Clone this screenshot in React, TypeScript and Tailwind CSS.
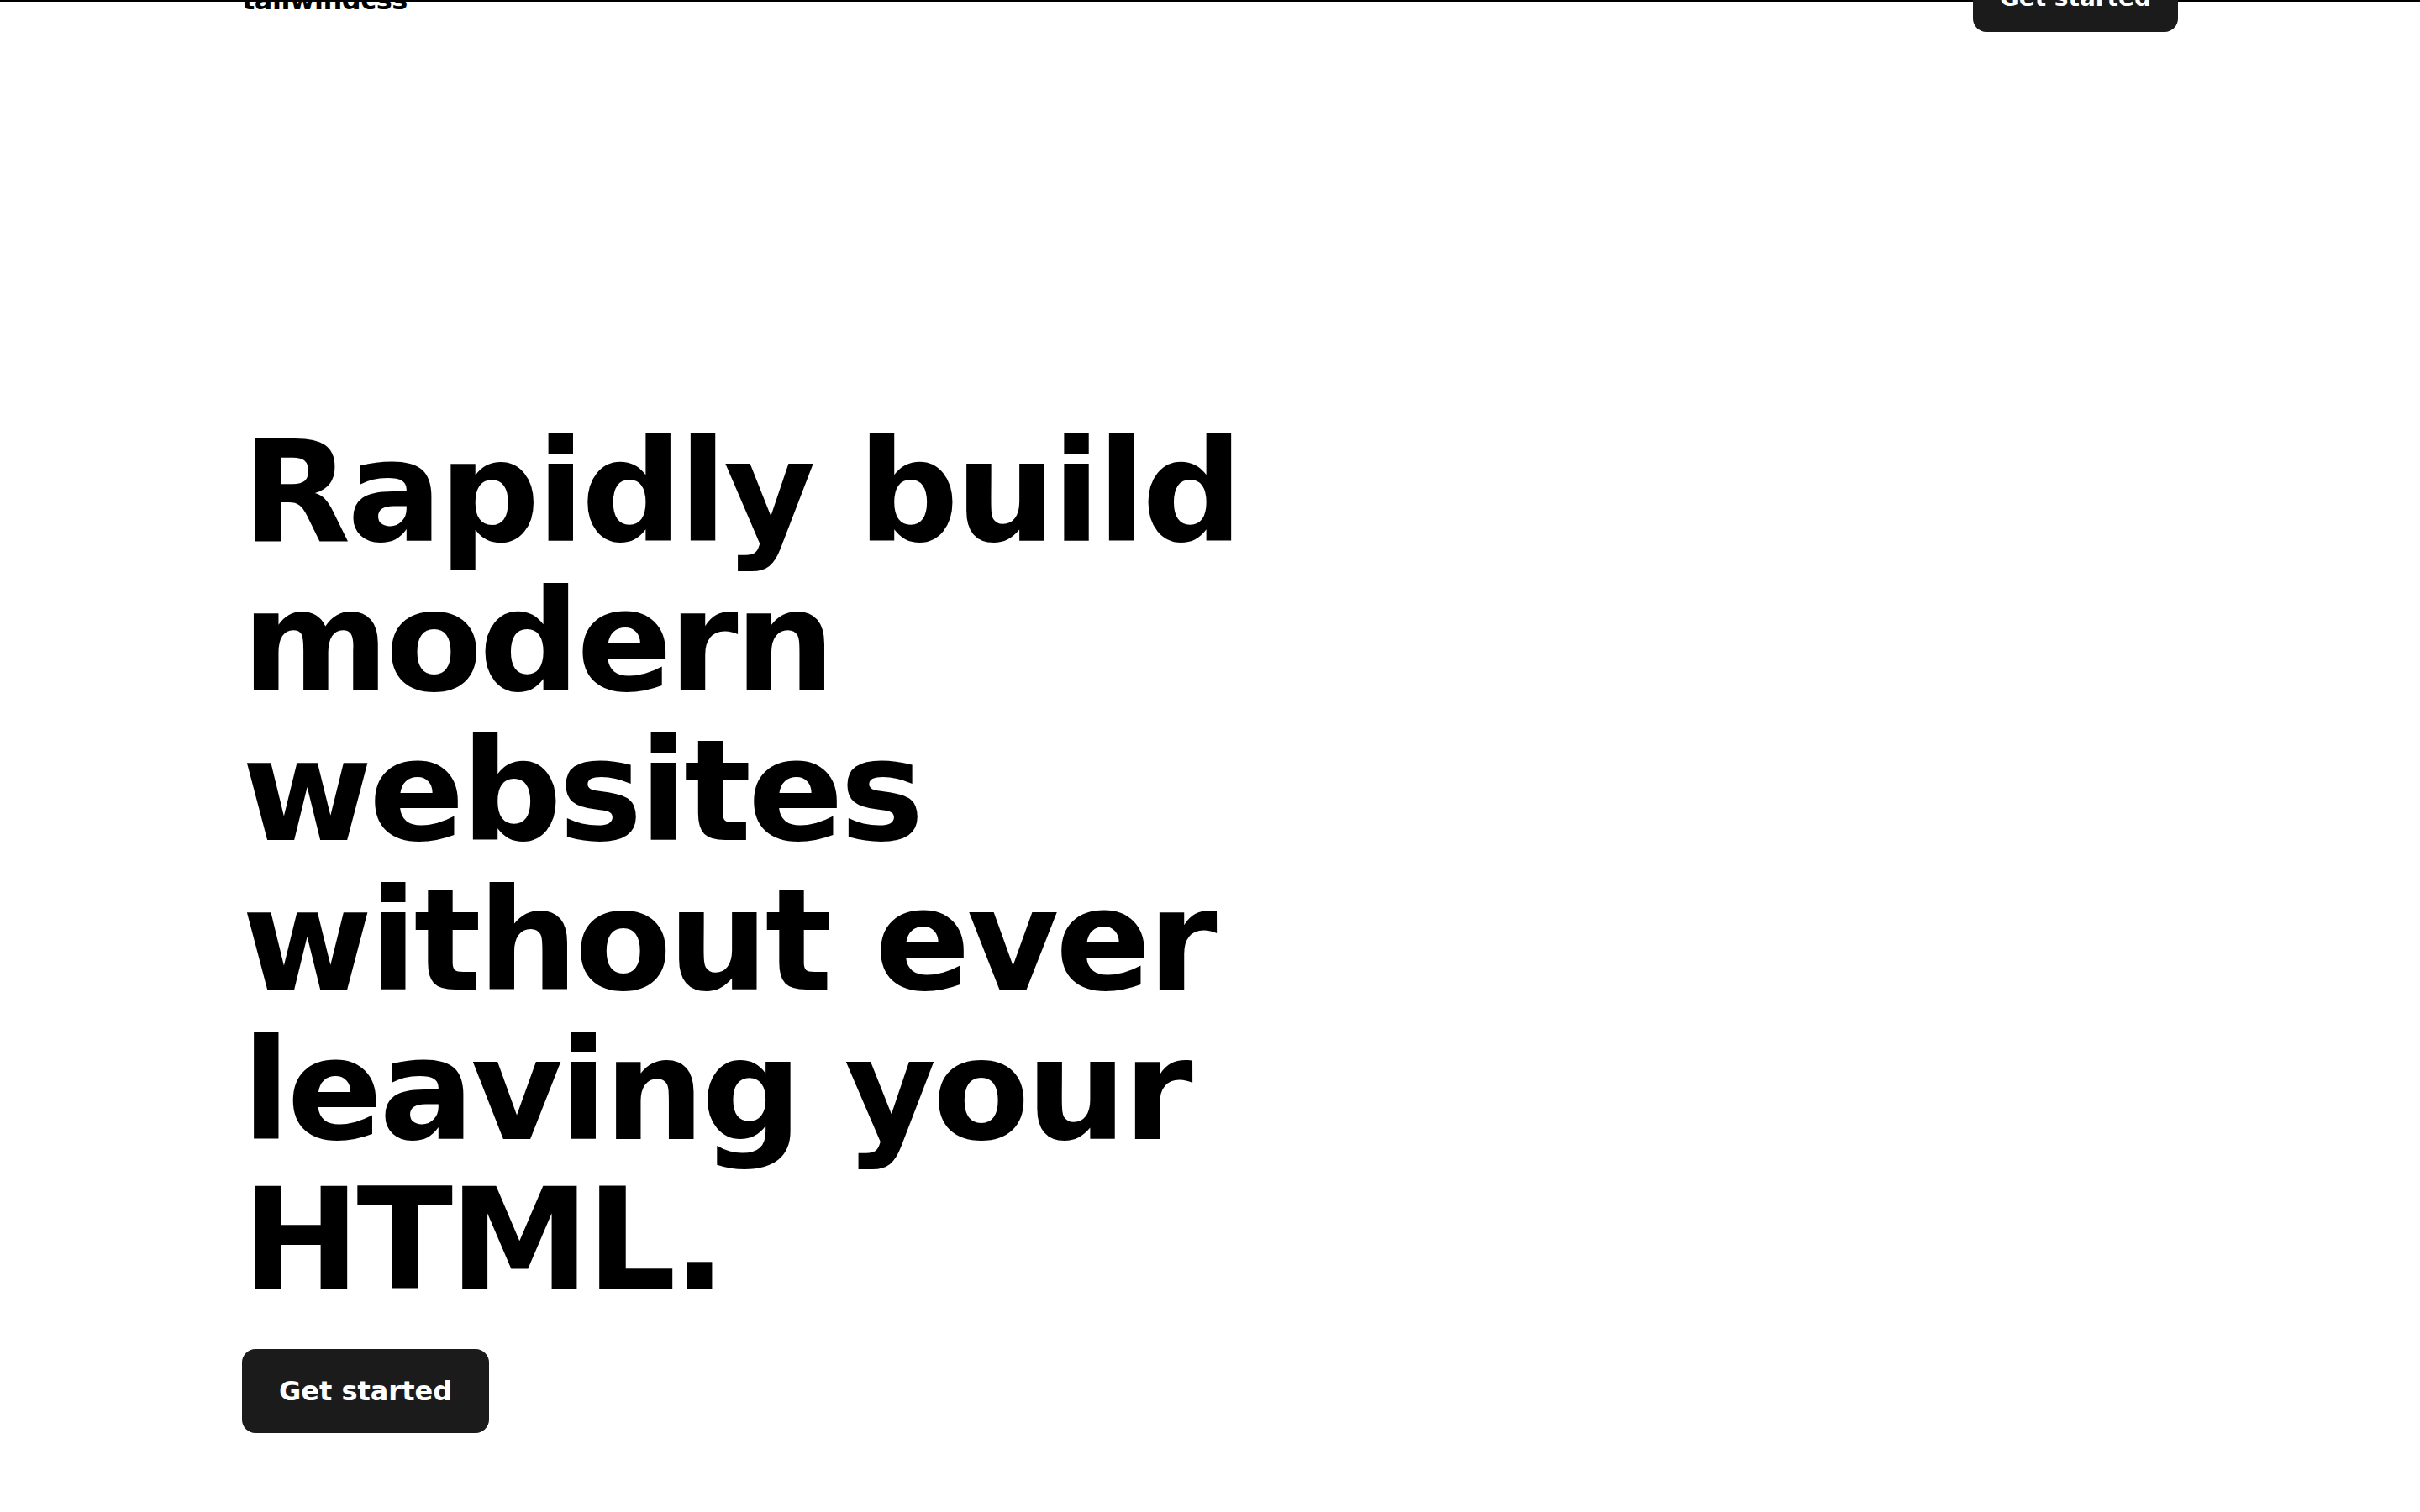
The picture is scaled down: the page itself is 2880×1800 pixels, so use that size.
import React, { FC } from 'react'

interface buttonProps {
    small?: boolean;
}

const StartButton: FC<buttonProps> = ({ small }) => {
    return (
        <button
            className={
                small
                    ? 'h-[80px] px-[32px] rounded-2xl bg-[#1b1b1b] text-white text-[28px] font-bold'
                    : 'h-[100px] px-[44px] rounded-2xl bg-[#1b1b1b] text-white text-[32px] font-bold'
            }
        >
            Get started
        </button>
    );
};

const App: FC = () => {
    return (
        <div className="min-h-screen bg-white text-black overflow-hidden font-['DejaVu_Sans',sans-serif]">
            <div className="h-[2px] bg-black" />
            <header className="-mt-[44px] px-[288px] flex items-center justify-between">
                <a href="/" className="pt-[4px] text-[32px] tracking-[-0.015em] font-bold text-black">tailwindcss</a>
                <StartButton small />
            </header>
            <main className="px-[288px] mt-[459px]">
                <h1 className="max-w-[1300px] text-[168px] leading-[178px] tracking-tight font-bold">
                    Rapidly build modern websites without ever leaving your HTML.
                </h1>
                <div className="mt-[41px]">
                    <StartButton />
                </div>
            </main>
        </div>
    );
};

export default App;
